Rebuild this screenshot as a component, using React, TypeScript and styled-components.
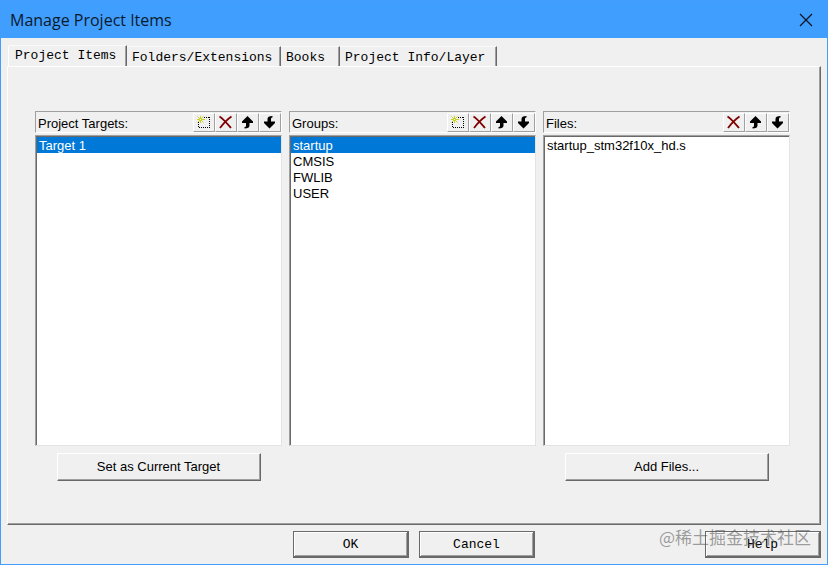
import React, { useState } from "react";
import styled, { createGlobalStyle, css } from "styled-components";

const GlobalStyle = createGlobalStyle`
  *, *::before, *::after { box-sizing: border-box; }
  body { margin: 0; background: #f0f0f0; }
`;

const sans = `"Liberation Sans", Arial, sans-serif`;
const mono = `"Liberation Mono", "Courier New", monospace`;

const Dialog = styled.main`
  position: relative;
  display: flex;
  flex-direction: column;
  min-height: 100vh;
  border: 1px solid #429dfc;
  background: #f0f0f0;
  color: #000;
  font: 13px/16px ${sans};
`;

const TitleBar = styled.header`
  display: flex;
  align-items: center;
  justify-content: space-between;
  height: 37px;
  padding: 0 14px 0 9px;
  background: #409eff;
`;

const Title = styled.h1`
  margin: 0;
  color: #0b1a2b;
  font: 400 16px/20px "Open Sans", "Noto Sans", sans-serif;
`;

const CloseButton = styled.button`
  display: flex;
  padding: 0;
  border: 0;
  background: none;
`;

const TabStrip = styled.div`
  display: flex;
  align-items: flex-end;
  padding: 7px 7px 0;
`;

const Tab = styled.button<{ $width: number; $selected: boolean }>`
  min-width: ${(p) => p.$width}px;
  height: 20px;
  padding: 2px 5px 0;
  border: 0;
  border-top: 1px solid #fafafa;
  border-right: 1px solid #696969;
  background: #f0f0f0;
  box-shadow: inset -1px 0 #a0a0a0;
  color: #000;
  font: 13px/16px ${mono};
  text-align: left;
  white-space: nowrap;
  ${(p) =>
    p.$selected &&
    css`
      height: 21px;
      padding: 0 6px;
      border-left: 1px solid #fff;
      border-top-left-radius: 2px;
    `}
`;

const Page = styled.section`
  flex: 1;
  display: flex;
  margin: 0 6px;
  padding: 44px 30px 43px 27px;
  border: 1px solid;
  border-color: #fff #696969 #696969 #fff;
  box-shadow: inset -1px -1px #a0a0a0;
`;

const Columns = styled.div`
  flex: 1;
  display: grid;
  grid-template-columns: repeat(3, minmax(0, 1fr));
  gap: 7px;
`;

const Column = styled.section`
  display: flex;
  flex-direction: column;
`;

const ColumnHeader = styled.div`
  display: flex;
  align-items: center;
  height: 22px;
  margin-bottom: 2px;
  padding-left: 2px;
  border: 1px solid;
  border-color: #a0a0a0 #fff #fff #a0a0a0;
`;

const ColumnTitle = styled.h2`
  flex: 1;
  margin: 0;
  padding-top: 3px;
  font: 400 13px/16px ${sans};
`;

const ToolButton = styled.button`
  display: grid;
  place-items: center;
  width: 22px;
  height: 19px;
  padding: 0;
  border: 1px solid;
  border-color: #fff #a0a0a0 #a0a0a0 #fff;
  background: #f0f0f0;
`;

const ListBox = styled.ul`
  flex: 1;
  min-height: 160px;
  margin: 0;
  padding: 1px 0 0 1px;
  border: 1px solid;
  border-color: #a0a0a0 #e3e3e3 #e3e3e3 #a0a0a0;
  box-shadow: inset 1px 1px #696969;
  background: #fff;
  list-style: none;
`;

const ListItem = styled.li<{ $selected: boolean }>`
  height: 16px;
  padding: 0 2px;
  line-height: 17px;
  background: ${(p) => (p.$selected ? "#0078d7" : "transparent")};
  color: ${(p) => (p.$selected ? "#fff" : "#000")};
  cursor: default;
`;

const ColumnAction = styled.div`
  display: flex;
  justify-content: center;
  height: 35px;
  padding-top: 7px;
`;

const PushButton = styled.button`
  width: 204px;
  height: 28px;
  padding: 0;
  border: 1px solid;
  border-color: #fff #696969 #696969 #fff;
  box-shadow: inset -1px -1px #a0a0a0;
  background: #f0f0f0;
  color: #000;
  font: 13px/16px ${sans};
`;

const Footer = styled.footer`
  display: grid;
  grid-template-columns: 1fr auto 1fr;
  padding: 6px;
`;

const Confirm = styled.div`
  grid-column: 2;
  display: flex;
  gap: 10px;
`;

const DialogButton = styled.button`
  justify-self: end;
  width: 116px;
  height: 27px;
  padding: 2px 0 0;
  border: 1px solid #696969;
  border-right-width: 2px;
  border-bottom-width: 2px;
  box-shadow: inset 1px 1px #fff, inset -1px -1px #a0a0a0;
  background: #f0f0f0;
  color: #000;
  font: 13px/16px ${mono};
`;

const Watermark = styled.div`
  position: absolute;
  right: 16px;
  bottom: 17px;
  color: rgba(80, 80, 80, 0.55);
  font: 17px/20px "Noto Sans CJK SC", sans-serif;
  white-space: nowrap;
  pointer-events: none;
`;

const CloseIcon = () => (
  <svg width="14" height="14" viewBox="0 0 14 14" aria-hidden="true">
    <path d="M1 1 13 13M13 1 1 13" stroke="#0a1420" strokeWidth="1.2" fill="none" />
  </svg>
);

const NewIcon = () => (
  <svg width="16" height="15" viewBox="0 0 16 15" aria-hidden="true">
    <path
      d="M6 2.500H14M13.500 2V13M14 12.500H2M2.500 12V7"
      stroke="#000"
      strokeDasharray="1 1"
      fill="none"
      shapeRendering="crispEdges"
    />
    <path
      d="M4.500 1V4M4.500 5V8M1 4.500H4M5 4.500H9M1.500 1.500 4 4M5 5 7.500 7.500M7.500 1.500 5 4M4 5 1.500 7.500"
      stroke="#c6d228"
      fill="none"
    />
  </svg>
);

const DeleteIcon = () => (
  <svg width="16" height="15" viewBox="0 0 16 15" aria-hidden="true">
    <path
      d="M1.500 1.500C5 3.500 9.500 9 13 13M13.500 1.500C9 4.500 5 9 2 13"
      stroke="#800000"
      strokeWidth="1.8"
      fill="none"
    />
  </svg>
);

const UpIcon = () => (
  <svg width="16" height="15" viewBox="0 0 16 15" aria-hidden="true">
    <path d="M7.500 1 13 6.500V8H9.500V10.500C9.500 12.500 8 13.500 4.500 13.500V12C5.500 12 6 11.500 6 10.500V8H2V6.500Z" fill="#000" />
  </svg>
);

const DownIcon = () => (
  <svg width="16" height="15" viewBox="0 0 16 15" aria-hidden="true">
    <path d="M7.500 13.500 2 8V6.500H5.500V4C5.500 2 7 1 10.500 1V2.500C9.500 2.500 9 3 9 4V6.500H13V8Z" fill="#000" />
  </svg>
);

const tools = {
  new: { label: "New", Icon: NewIcon },
  delete: { label: "Delete", Icon: DeleteIcon },
  up: { label: "Move up", Icon: UpIcon },
  down: { label: "Move down", Icon: DownIcon },
};

type ItemColumnProps = {
  title: string;
  items: string[];
  initial: number;
  toolset: (keyof typeof tools)[];
  action?: string;
};

function ItemColumn({ title, items, initial, toolset, action }: ItemColumnProps) {
  const [selected, setSelected] = useState(initial);
  return (
    <Column>
      <ColumnHeader>
        <ColumnTitle>{title}:</ColumnTitle>
        {toolset.map((key) => {
          const { label, Icon } = tools[key];
          return (
            <ToolButton key={key} type="button" aria-label={label}>
              <Icon />
            </ToolButton>
          );
        })}
      </ColumnHeader>
      <ListBox role="listbox" aria-label={title}>
        {items.map((item, i) => (
          <ListItem
            key={item}
            role="option"
            aria-selected={i === selected}
            $selected={i === selected}
            onClick={() => setSelected(i)}
          >
            {item}
          </ListItem>
        ))}
      </ListBox>
      <ColumnAction>{action && <PushButton type="button">{action}</PushButton>}</ColumnAction>
    </Column>
  );
}

const tabs = [
  { label: "Project Items", width: 119 },
  { label: "Folders/Extensions", width: 154 },
  { label: "Books", width: 59 },
  { label: "Project Info/Layer", width: 157 },
];

export default function App() {
  const [tab, setTab] = useState(0);
  return (
    <>
      <GlobalStyle />
      <Dialog>
        <TitleBar>
          <Title>Manage Project Items</Title>
          <CloseButton type="button" aria-label="Close">
            <CloseIcon />
          </CloseButton>
        </TitleBar>
        <TabStrip role="tablist">
          {tabs.map(({ label, width }, i) => (
            <Tab
              key={label}
              type="button"
              role="tab"
              aria-selected={i === tab}
              $selected={i === tab}
              $width={width}
              onClick={() => setTab(i)}
            >
              {label}
            </Tab>
          ))}
        </TabStrip>
        <Page role="tabpanel">
          <Columns>
            <ItemColumn
              title="Project Targets"
              items={["Target 1"]}
              initial={0}
              toolset={["new", "delete", "up", "down"]}
              action="Set as Current Target"
            />
            <ItemColumn
              title="Groups"
              items={["startup", "CMSIS", "FWLIB", "USER"]}
              initial={0}
              toolset={["new", "delete", "up", "down"]}
            />
            <ItemColumn
              title="Files"
              items={["startup_stm32f10x_hd.s"]}
              initial={-1}
              toolset={["delete", "up", "down"]}
              action="Add Files..."
            />
          </Columns>
        </Page>
        <Footer>
          <Confirm>
            <DialogButton type="button">OK</DialogButton>
            <DialogButton type="button">Cancel</DialogButton>
          </Confirm>
          <DialogButton type="button">Help</DialogButton>
        </Footer>
        <Watermark>@稀土掘金技术社区</Watermark>
      </Dialog>
    </>
  );
}
